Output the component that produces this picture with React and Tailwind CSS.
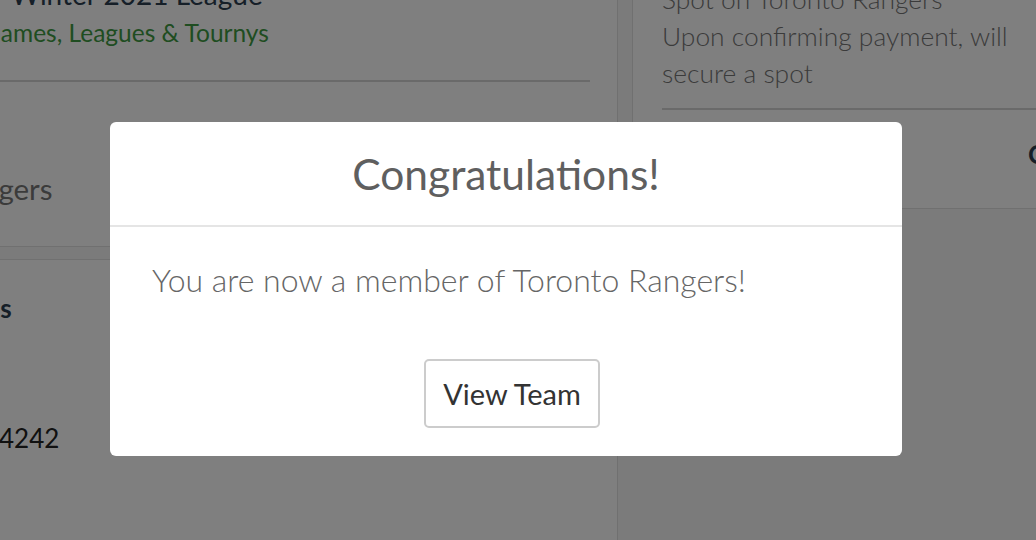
import React from 'react';

const App = () => {
  return (
    <div className="relative h-[540px] w-[1036px] overflow-hidden bg-[#f6f6f6] font-['Lato',sans-serif]">
      {/* page behind the modal */}
      <div className="flex gap-[14px] -mt-[30px] -ml-[40px]">
        <div className="flex w-[658px] shrink-0 flex-col gap-[12px]">
          <div className="border border-[#e0e0e0] bg-white pl-[20px] pr-[27px] pt-[6px] h-[277px]">
            <div className="ml-[30px] text-[28px] leading-[34px] text-[#2c3e50]">Winter 2021 League</div>
            <div className="mt-[7px] ml-[2px] text-[24.5px] leading-[30px] text-[#3f9a43]">Games, Leagues &amp; Tournys</div>
            <div className="mt-[32px] h-[2px] bg-[#d4d4d4]" />
            <div className="mt-[87px] -ml-[32px] text-[29.5px] leading-[40px] text-[#777777]">Rangers</div>
          </div>
          <div className="border border-[#e0e0e0] bg-white pl-[20px] pr-[27px] pt-[30px] h-[320px]">
            <div className="-ml-[50px] text-[26px] font-bold leading-[37px] text-[#2c3e50]">Details</div>
            <div className="mt-[93px] ml-[18px] text-[26px] leading-[37px] text-[#222222]">4242</div>
          </div>
        </div>
        <div className="w-[500px] shrink-0">
          <div className="border border-[#e0e0e0] bg-white pl-[29px] h-[239px]">
            <div className="w-[380px] pt-[10px] text-[26.4px] font-light leading-[37px] text-[#777777]">
              <div>Spot on Toronto Rangers</div>
              <div>Upon confirming payment, will secure a spot</div>
            </div>
            <div className="mt-[16px] h-[2px] bg-[#d4d4d4]" />
            <div className="grid grid-cols-[366px_auto] pt-[26px] text-[26px] font-bold leading-[37px] text-[#2c3e50]">
              <span>Item</span>
              <span>Cost</span>
            </div>
          </div>
        </div>
      </div>

      {/* modal */}
      <div className="absolute inset-0 flex justify-center bg-black/50 pt-[122px] pr-[24px]">
        <div className="flex h-[334px] w-[792px] flex-col rounded-[6px] bg-white">
          <div className="flex h-[105px] shrink-0 items-center justify-center border-b-2 border-[#e5e5e5] text-[42.5px] text-[#5f5f5f]">
            Congratulations!
          </div>
          <div className="flex flex-col pl-[42px] pr-[30px] pt-[29px]">
            <div className="text-[32px] font-light leading-[48px] text-[#666666]">
              You are now a member of Toronto Rangers!
            </div>
            <button className="mx-auto mt-[55px] h-[69px] w-[176px] rounded-[5px] border-2 border-[#cccccc] bg-white text-[29px] text-[#333333]">
              View Team
            </button>
          </div>
        </div>
      </div>
    </div>
  );
};

export default App;
